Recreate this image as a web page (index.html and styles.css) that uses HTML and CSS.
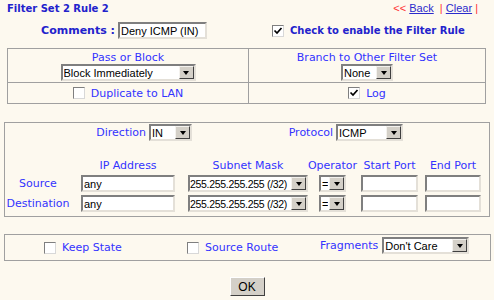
FILE: index.html
```html
<!DOCTYPE html>
<html lang="en">
<head>
    <meta charset="UTF-8">
    <title>Filter Set 2 Rule 2</title>
    <link rel="stylesheet" href="styles.css">
</head>
<body>
    <div class="top">
        <span class="title">Filter Set 2 Rule 2</span>
        <span class="nav"><span class="red">&lt;&lt;</span> <a href="#">Back</a> &nbsp;<span class="red">|</span> <a href="#">Clear</a> <span class="red">|</span></span>
    </div>

    <div class="comments">
        <div class="cmt">
            <label for="cmt" class="bold">Comments :</label>
            <input type="text" id="cmt" class="txt w-cmt" value="Deny ICMP (IN)">
        </div>
        <div class="enable">
            <input type="checkbox" id="enable" class="cb" checked>
            <label for="enable" class="bold">Check to enable the Filter Rule</label>
        </div>
    </div>

    <div class="box1">
        <div class="cell c1">
            <div class="lbl">Pass or Block</div>
            <span class="sel w-block"><select><option>Block Immediately</option></select><span class="arr"></span></span>
        </div>
        <div class="cell c2">
            <div class="lbl">Branch to Other Filter Set</div>
            <span class="sel w-none"><select><option>None</option></select><span class="arr"></span></span>
        </div>
        <div class="cell c3">
            <input type="checkbox" id="dup" class="cb">
            <label for="dup">Duplicate to LAN</label>
        </div>
        <div class="cell c4">
            <input type="checkbox" id="log" class="cb" checked>
            <label for="log">Log</label>
        </div>
    </div>

    <div class="box2">
        <div class="dirrow">
            <div class="dir">
                <label>Direction</label>
                <span class="sel w-dir"><select><option>IN</option></select><span class="arr"></span></span>
            </div>
            <div class="proto">
                <label>Protocol</label>
                <span class="sel w-proto"><select><option>ICMP</option></select><span class="arr"></span></span>
            </div>
        </div>

        <div class="grid">
            <span></span>
            <span class="hd">IP Address</span>
            <span class="hd">Subnet Mask</span>
            <span class="hd">Operator</span>
            <span class="hd">Start Port</span>
            <span class="hd">End Port</span>

            <label>Source</label>
            <input type="text" class="txt w-ip" value="any">
            <span class="sel w-mask"><select><option>255.255.255.255 (/32)</option></select><span class="arr"></span></span>
            <span class="sel w-op"><select><option>=</option></select><span class="arr"></span></span>
            <input type="text" class="txt w-start">
            <input type="text" class="txt w-end">

            <label>Destination</label>
            <input type="text" class="txt w-ip" value="any">
            <span class="sel w-mask"><select><option>255.255.255.255 (/32)</option></select><span class="arr"></span></span>
            <span class="sel w-op"><select><option>=</option></select><span class="arr"></span></span>
            <input type="text" class="txt w-start">
            <input type="text" class="txt w-end">
        </div>
    </div>

    <div class="box3">
        <div class="opt o1">
            <input type="checkbox" id="keep" class="cb">
            <label for="keep">Keep State</label>
        </div>
        <div class="opt o2">
            <input type="checkbox" id="route" class="cb">
            <label for="route">Source Route</label>
        </div>
        <div class="frag">
            <label>Fragments</label>
            <span class="sel w-frag"><select><option>Don't Care</option></select><span class="arr"></span></span>
        </div>
    </div>

    <div class="buttons">
        <input type="submit" class="ok" value="OK">
    </div>
</body>
</html>
```

FILE: styles.css
```css
* {
    box-sizing: border-box;
}

body {
    margin: 0;
    background: #fdf9ef;
    font-family: "DejaVu Sans", Verdana, sans-serif;
    font-size: 11px;
    line-height: 13px;
    color: #3333ff;
    width: 494px;
}

.bold {
    font-weight: bold;
    color: #2222cc;
}

/* header */
.top {
    display: flex;
    justify-content: space-between;
    padding: 2px 16px 0 7px;
}

.title {
    font-weight: bold;
    font-size: 10px;
    color: #2222cc;
}

.nav {
    font-family: "Liberation Sans", Arial, sans-serif;
    font-size: 11px;
}

.nav a {
    color: #2b2bcc;
}

.red {
    color: #ff3333;
}

/* comments row */
.comments {
    display: flex;
    align-items: center;
    margin-top: 7px;
}

.cmt {
    width: 207px;
    display: flex;
    justify-content: flex-end;
    align-items: center;
    gap: 3px;
}

.enable {
    margin-left: 65px;
    display: flex;
    align-items: center;
    gap: 6px;
}

.enable label {
    font-size: 10px;
}

/* form widgets */
.txt {
    height: 17px;
    border: 2px solid;
    border-color: #7f7f7f #e4e0d8 #e4e0d8 #7f7f7f;
    background: #fff;
    font-family: "Liberation Sans", Arial, sans-serif;
    font-size: 11px;
    padding: 0 1px;
    margin: 0;
    color: #000;
}

.sel {
    display: inline-flex;
    height: 17px;
    border: 2px solid;
    border-color: #7f7f7f #e4e0d8 #e4e0d8 #7f7f7f;
    background: #fff;
    vertical-align: middle;
}

.sel select {
    appearance: none;
    border: none;
    background: transparent;
    flex: 1;
    min-width: 0;
    height: 100%;
    padding: 0 1px;
    margin: 0;
    font-family: "Liberation Sans", Arial, sans-serif;
    font-size: 11px;
    color: #000;
}

.w-mask select {
    font-size: 10.5px;
    letter-spacing: -0.3px;
    padding: 0;
}

.arr {
    width: 15px;
    flex: none;
    background: #d4d0c8;
    border: 1px solid;
    border-color: #f4f2ee #404040 #404040 #f4f2ee;
    display: flex;
    align-items: center;
    justify-content: center;
}

.arr::after {
    content: "";
    border-left: 3.5px solid transparent;
    border-right: 3.5px solid transparent;
    border-top: 4px solid #000;
}

.cb {
    appearance: none;
    width: 12px;
    height: 12px;
    margin: 0;
    border: 1px solid;
    border-color: #7f7f7f #d8d8d8 #d8d8d8 #7f7f7f;
    background: #fff;
    flex: none;
}

.cb:checked {
    background: #fff url("data:image/svg+xml,%3Csvg xmlns='http://www.w3.org/2000/svg' width='10' height='10'%3E%3Cpath d='M1.5 4.5l2.5 2.5 4.5-5' stroke='%23000' stroke-width='1.7' fill='none'/%3E%3C/svg%3E") no-repeat center;
}

.w-cmt { width: 89px; }
.w-block { width: 135px; }
.w-none { width: 52px; }
.w-dir { width: 43px; }
.w-proto { width: 67px; }
.w-ip { width: 94px; }
.w-mask { width: 120px; }
.w-op { width: 27px; }
.w-start { width: 57px; }
.w-end { width: 56px; }
.w-frag { width: 87px; }

/* first box */
.box1 {
    margin: 9px 0 0 7px;
    width: 479px;
    display: grid;
    grid-template-columns: 241px 1fr;
    border-top: 1px solid #a0a0a0;
    border-left: 1px solid #a0a0a0;
}

.cell {
    border-right: 1px solid #a0a0a0;
    border-bottom: 1px solid #a0a0a0;
    text-align: center;
}

.c1, .c2 {
    padding: 2px 0 1px;
}

.c3, .c4 {
    height: 21px;
    display: flex;
    align-items: center;
    justify-content: center;
    gap: 6px;
}

/* second box */
.box2, .box3 {
    margin-left: 4px;
    border: 1px solid #a0a0a0;
}

.box2 {
    margin-top: 18px;
    width: 486px;
    padding: 1px 0 4px;
}

.dirrow {
    display: flex;
    height: 17px;
}

.dir, .proto {
    display: flex;
    justify-content: flex-end;
    align-items: center;
    gap: 3px;
}

.dir { width: 187px; }
.proto { width: 211px; }

.grid {
    margin-top: 18px;
    display: grid;
    grid-template-columns: 66px 114px 126px 43px 71px 56px;
    grid-template-rows: 13px 17px 17px;
    row-gap: 3px;
    justify-items: center;
    align-items: center;
}

.hd {
    white-space: nowrap;
}

/* third box */
.box3 {
    margin-top: 17px;
    width: 487px;
    padding: 2px 0 6px 39px;
    display: flex;
    align-items: center;
}

.opt {
    display: flex;
    align-items: center;
    gap: 6px;
    margin-top: 4px;
}

.o1 { width: 143px; }
.o2 { width: 133px; }

.frag {
    display: flex;
    align-items: center;
    gap: 4px;
}

.buttons {
    text-align: center;
    margin-top: 16px;
}

.ok {
    width: 35px;
    height: 19px;
    background: #d4d0c8;
    border: 1px solid;
    border-color: #fff #404040 #404040 #fff;
    font-family: "Liberation Sans", Arial, sans-serif;
    font-size: 12px;
    color: #000;
    padding: 0;
}
```
